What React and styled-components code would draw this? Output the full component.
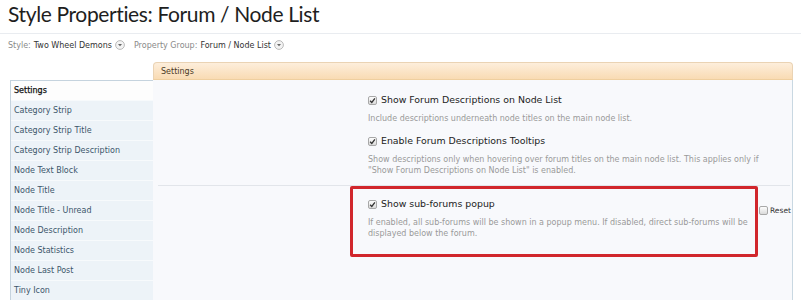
import React from 'react';
import styled, { createGlobalStyle } from 'styled-components';

const Global = createGlobalStyle`
	html, body {
		margin: 0;
		padding: 0;
		background: #fff;
	}
	body {
		font-family: "DejaVu Sans", Verdana, sans-serif;
		color: #222;
	}
`;

const Page = styled.div`
	width: 801px;
	height: 300px;
	overflow: hidden;
`;

const TitleBar = styled.div`
	height: 33px;
	padding: 0 8px;
	border-bottom: 1px solid #e9ecf0;
`;

const Title = styled.h1`
	margin: 0;
	font-family: Lato, "Liberation Sans", sans-serif;
	font-weight: normal;
	font-size: 21px;
	line-height: 28px;
	letter-spacing: -0.37px;
	color: #1e1e1e;
`;

const Crumbs = styled.div`
	display: flex;
	align-items: center;
	gap: 9px;
	height: 22px;
	padding: 0 8px;
	font-size: 8px;
`;

const Crumb = styled.span`
	display: flex;
	align-items: center;
	gap: 3px;
	color: #333;

	> em {
		font-style: normal;
		color: #8a8a8a;
	}
`;

const Layout = styled.div`
	display: grid;
	grid-template-columns: 143px 1fr;
	grid-template-rows: 18px 1fr;
	grid-template-areas:
		'blank head'
		'side body';
	margin: 6px 8px 0 10px;
	height: 238px;
`;

const PanelHead = styled.div`
	grid-area: head;
	display: flex;
	align-items: center;
	padding: 0 7px;
	background: linear-gradient(#fdeedb, #f9dbb3);
	border: 1px solid #ead3b4;
	border-bottom-color: #efcf9f;
	border-radius: 4px 4px 0 0;
	font-size: 8px;
	color: #4a3a26;
`;

const Side = styled.ul`
	grid-area: side;
	list-style: none;
	margin: 0;
	padding: 0;
	border-left: 1px solid #c5d3de;
	border-top: 1px solid #c5d3de;
`;

const SideItem = styled.li`
	height: 19px;
	line-height: 19px;
	padding-left: 3px;
	border-bottom: 1px solid #f7fafc;
	background: ${(p) => (p.$active ? '#fdfdfd' : '#edf3f8')};
	font-size: 8px;
	color: ${(p) => (p.$active ? '#111' : '#3c566b')};
	-webkit-text-stroke: ${(p) => (p.$active ? '0.25px #111' : '0')};
	white-space: nowrap;
`;

const Body = styled.div`
	grid-area: body;
	background: #f8f9fc;
	border-right: 1px solid #c9d8e2;
`;

const Group = styled.div`
	padding: 13px 0 9px 215px;
`;

const Option = styled.div`
	width: 396px;

	& + & {
		margin-top: 10px;
	}
`;

const CheckLabel = styled.label`
	display: flex;
	align-items: center;
	gap: 4px;
	font-size: 9.4px;
	line-height: 14px;
	color: #222;
`;

const Desc = styled.p`
	margin: 6px 0 0;
	font-size: 8px;
	line-height: 11px;
	color: #9a9a9a;
`;

const Divider = styled.hr`
	margin: 0 2px 0 5px;
	border: 0;
	border-top: 1px solid #e2e5ea;
`;

const HighlightRow = styled.div`
	display: flex;
	align-items: flex-start;
	gap: 1px;
	padding-left: 197px;
`;

const Highlight = styled.div`
	width: 387px;
	padding: 8px 0 15px 15px;
	border: 3px solid #d1262c;
	border-radius: 2px;
`;

const Reset = styled.label`
	display: flex;
	align-items: center;
	gap: 2px;
	margin-top: 20px;
	font-size: 7.5px;
	color: #333;
`;

const CheckBox = ({ checked = true }) => (
	<svg width="9" height="9" viewBox="0 0 9 9">
		<defs>
			<linearGradient id="cbFill" x1="0" y1="0" x2="0" y2="1">
				<stop offset="0" stopColor="#ffffff" />
				<stop offset="1" stopColor="#d8d8d8" />
			</linearGradient>
		</defs>
		<rect x="0.5" y="0.5" width="8" height="8" rx="1.5" fill="url(#cbFill)" stroke="#a8a8a8" />
		{checked && <path d="M2.1 4.7 L3.8 6.4 L6.9 2.3" fill="none" stroke="#333" strokeWidth="1.3" />}
	</svg>
);

const Drop = () => (
	<svg width="10" height="10" viewBox="0 0 10 10">
		<circle cx="5" cy="5" r="4.4" fill="#f3f3f3" stroke="#b3b3b3" strokeWidth="0.9" />
		<path d="M3 4 L5 6.3 L7 4 Z" fill="#666" />
	</svg>
);

const sideItems = [
	'Settings',
	'Category Strip',
	'Category Strip Title',
	'Category Strip Description',
	'Node Text Block',
	'Node Title',
	'Node Title - Unread',
	'Node Description',
	'Node Statistics',
	'Node Last Post',
	'Tiny Icon',
];

const App = () => {
	return (
		<Page>
			<Global />
			<TitleBar>
				<Title>Style Properties: Forum / Node List</Title>
			</TitleBar>
			<Crumbs>
				<Crumb>
					<em>Style:</em> Two Wheel Demons <Drop />
				</Crumb>
				<Crumb>
					<em>Property Group:</em> Forum / Node List <Drop />
				</Crumb>
			</Crumbs>
			<Layout>
				<PanelHead>Settings</PanelHead>
				<Side>
					{sideItems.map((item, i) => (
						<SideItem key={item} $active={i === 0}>
							{item}
						</SideItem>
					))}
				</Side>
				<Body>
					<Group>
						<Option>
							<CheckLabel>
								<CheckBox /> Show Forum Descriptions on Node List
							</CheckLabel>
							<Desc>Include descriptions underneath node titles on the main node list.</Desc>
						</Option>
						<Option>
							<CheckLabel>
								<CheckBox /> Enable Forum Descriptions Tooltips
							</CheckLabel>
							<Desc>
								Show descriptions only when hovering over forum titles on the main node list. This applies only if
								"Show Forum Descriptions on Node List" is enabled.
							</Desc>
						</Option>
					</Group>
					<Divider />
					<HighlightRow>
						<Highlight>
							<CheckLabel>
								<CheckBox /> Show sub-forums popup
							</CheckLabel>
							<Desc>
								If enabled, all sub-forums will be shown in a popup menu. If disabled, direct sub-forums will be
								displayed below the forum.
							</Desc>
						</Highlight>
						<Reset>
							<CheckBox checked={false} /> Reset
						</Reset>
					</HighlightRow>
				</Body>
			</Layout>
		</Page>
	);
};

export default App;
